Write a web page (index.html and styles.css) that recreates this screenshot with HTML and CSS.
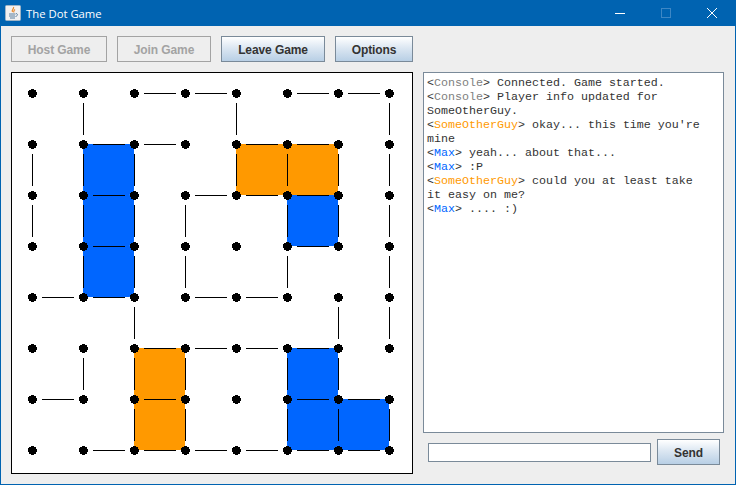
FILE: index.html
```html
<!DOCTYPE html>
<html lang="en">
<head>
  <meta charset="UTF-8" />
  <title>The Dot Game</title>
  <link rel="stylesheet" href="styles.css">
</head>
<body>
  <div class="window">
    <div class="titlebar">
      <svg class="app-icon" width="16" height="16" viewBox="0 0 16 16">
        <rect x="0.5" y="0.5" width="15" height="15" rx="1" fill="#f1f1f1" stroke="#9fb4c6" />
        <path d="M8.5 2c1 1.500-2.500 3-1 5M10 4.500c-1 1-2 1.500-1 3" fill="none" stroke="#e8892b" stroke-width="1.200" />
        <path d="M4 9h6.500M4 11h6M5 13h5M11 8.500c2 0 2 2.500-.5 3" fill="none" stroke="#5b7f9e" />
      </svg>
      <span class="title">The Dot Game</span>
      <div class="win-controls">
        <svg width="10" height="10" viewBox="0 0 10 10"><path d="M0 5.500h10" stroke="#fff" /></svg>
        <svg width="10" height="10" viewBox="0 0 10 10"><rect x="0.500" y="0.500" width="9" height="9" fill="none" stroke="#3d87c5" /></svg>
        <svg width="10" height="10" viewBox="0 0 10 10"><path d="M0 0l10 10M10 0l-10 10" stroke="#fff" /></svg>
      </div>
    </div>

    <div class="content">
      <div class="toolbar">
        <button class="btn host" disabled>Host Game</button>
        <button class="btn join" disabled>Join Game</button>
        <button class="btn leave">Leave Game</button>
        <button class="btn options">Options</button>
      </div>

      <div class="main">
        <div class="board">
          <!-- viewBox uses window coordinates, dots are 51px apart -->
          <svg width="400" height="400" viewBox="12 73 400 400">
            <g class="blue">
              <rect x="83" y="144" width="51" height="51" rx="5" />
              <rect x="83" y="195" width="51" height="51" rx="5" />
              <rect x="83" y="246" width="51" height="51" rx="5" />
              <rect x="287" y="195" width="51" height="51" rx="5" />
              <rect x="287" y="348" width="51" height="51" rx="5" />
              <rect x="287" y="399" width="51" height="51" rx="5" />
              <rect x="338" y="399" width="51" height="51" rx="5" />
            </g>
            <g class="orange">
              <rect x="236" y="144" width="51" height="51" rx="5" />
              <rect x="287" y="144" width="51" height="51" rx="5" />
              <rect x="134" y="348" width="51" height="51" rx="5" />
              <rect x="134" y="399" width="51" height="51" rx="5" />
            </g>
            <path class="edges" d="
              M144 93.500h32M195 93.500h32M297 93.500h32M348 93.500h32
              M93 144.500h32M144 144.500h32M246 144.500h32M297 144.500h32
              M93 195.500h32M195 195.500h32M246 195.500h32M297 195.500h32
              M93 246.500h32M297 246.500h32
              M42 297.500h32M93 297.500h32M195 297.500h32M246 297.500h32
              M144 348.500h32M195 348.500h32M246 348.500h32M297 348.500h32
              M42 399.500h32M144 399.500h32M297 399.500h32M348 399.500h32
              M93 450.500h32M144 450.500h32M195 450.500h32M246 450.500h32M297 450.500h32M348 450.500h32
              M83.500 103v32M236.500 103v32M389.500 103v32
              M32.500 154v32M83.500 154v32M134.500 154v32M236.500 154v32M287.500 154v32M338.500 154v32M389.500 154v32
              M32.500 205v32M83.500 205v32M134.500 205v32M185.500 205v32M287.500 205v32M338.500 205v32M389.500 205v32
              M83.500 256v32M134.500 256v32M185.500 256v32M287.500 256v32M389.500 256v32
              M134.500 307v32M338.500 307v32M389.500 307v32
              M83.500 358v32M134.500 358v32M185.500 358v32M287.500 358v32M338.500 358v32
              M134.500 409v32M185.500 409v32M287.500 409v32M338.500 409v32M389.500 409v32" />
            <path class="dots" d="
              M32.500 93.500h0M83.500 93.500h0M134.500 93.500h0M185.500 93.500h0M236.500 93.500h0M287.500 93.500h0M338.500 93.500h0M389.500 93.500h0
              M32.500 144.500h0M83.500 144.500h0M134.500 144.500h0M185.500 144.500h0M236.500 144.500h0M287.500 144.500h0M338.500 144.500h0M389.500 144.500h0
              M32.500 195.500h0M83.500 195.500h0M134.500 195.500h0M185.500 195.500h0M236.500 195.500h0M287.500 195.500h0M338.500 195.500h0M389.500 195.500h0
              M32.500 246.500h0M83.500 246.500h0M134.500 246.500h0M185.500 246.500h0M236.500 246.500h0M287.500 246.500h0M338.500 246.500h0M389.500 246.500h0
              M32.500 297.500h0M83.500 297.500h0M134.500 297.500h0M185.500 297.500h0M236.500 297.500h0M287.500 297.500h0M338.500 297.500h0M389.500 297.500h0
              M32.500 348.500h0M83.500 348.500h0M134.500 348.500h0M185.500 348.500h0M236.500 348.500h0M287.500 348.500h0M338.500 348.500h0M389.500 348.500h0
              M32.500 399.500h0M83.500 399.500h0M134.500 399.500h0M185.500 399.500h0M236.500 399.500h0M287.500 399.500h0M338.500 399.500h0M389.500 399.500h0
              M32.500 450.500h0M83.500 450.500h0M134.500 450.500h0M185.500 450.500h0M236.500 450.500h0M287.500 450.500h0M338.500 450.500h0M389.500 450.500h0" />
          </svg>
        </div>

        <div class="chat">
          <div class="log">
            <div>&lt;<span class="console">Console</span>&gt; Connected. Game started.</div>
            <div>&lt;<span class="console">Console</span>&gt; Player info updated for SomeOtherGuy.</div>
            <div>&lt;<span class="other">SomeOtherGuy</span>&gt; okay... this time you're mine</div>
            <div>&lt;<span class="max">Max</span>&gt; yeah... about that...</div>
            <div>&lt;<span class="max">Max</span>&gt; :P</div>
            <div>&lt;<span class="other">SomeOtherGuy</span>&gt; could you at least take it easy on me?</div>
            <div>&lt;<span class="max">Max</span>&gt; .... :)</div>
          </div>
          <div class="send-row">
            <input type="text" class="msg" />
            <button class="btn send">Send</button>
          </div>
        </div>
      </div>
    </div>
  </div>
</body>
</html>
```

FILE: styles.css
```css
html, body {
  margin: 0;
  padding: 0;
  height: 100%;
  overflow: hidden;
}
.window {
  width: 736px;
  height: 485px;
  box-sizing: border-box;
  display: flex;
  flex-direction: column;
  border: 1px solid #0063b1;
  border-top: none;
  background: #eeeeee;
}
.titlebar {
  flex-shrink: 0;
  height: 26px;
  display: flex;
  align-items: center;
  padding-left: 4px;
  background: #0063b1;
  color: #fff;
  font-family: 'Open Sans', sans-serif;
  font-size: 11.3px;
}
.app-icon {
  margin-right: 5px;
}
.win-controls {
  margin-left: auto;
  margin-right: 18px;
  display: flex;
  gap: 36px;
}
.content {
  flex: 1;
  padding: 10px 11px 10px 10px;
  display: flex;
  flex-direction: column;
  gap: 10px;
}
.toolbar {
  display: flex;
  gap: 10px;
}
.btn {
  height: 26px;
  padding: 1px 0 0;
  border: 1px solid #7a8a99;
  background: linear-gradient(to bottom, #ffffff, #dce7f2 45%, #b8cfe5);
  color: #333;
  font-family: 'Liberation Sans', sans-serif;
  font-size: 12px;
  font-weight: bold;
  letter-spacing: -0.1px;
}
.btn:disabled {
  border-color: #a3a3a3;
  background: #eeeeee;
  color: #a3a3a3;
}
.host { width: 96px; }
.join { width: 94px; }
.leave { width: 104px; }
.options { width: 78px; }
.send { width: 63px; }

.main {
  display: flex;
  gap: 10px;
}
.board {
  width: 402px;
  height: 402px;
  box-sizing: border-box;
  border: 1px solid #000;
  background: #fff;
}
.board svg {
  display: block;
}
.blue { fill: #0066ff; }
.orange { fill: #ff9900; }
.edges {
  fill: none;
  stroke: #000;
  stroke-width: 1;
  shape-rendering: crispEdges;
}
.dots {
  fill: none;
  stroke: #000;
  stroke-width: 9;
  stroke-linecap: round;
  shape-rendering: crispEdges;
}
.chat {
  width: 301px;
  display: flex;
  flex-direction: column;
}
.log {
  height: 361px;
  box-sizing: border-box;
  padding: 3px 17px 0 3px;
  border: 1px solid #7a8a99;
  background: #fff;
  color: #333;
  font-family: 'Liberation Mono', monospace;
  font-size: 11.67px;
  line-height: 14px;
}
.console { color: #808080; }
.other { color: #ff9900; }
.max { color: #0066ff; }
.send-row {
  display: flex;
  align-items: center;
  gap: 6px;
  padding: 6px 4px 0 5px;
}
.msg {
  width: 223px;
  height: 19px;
  box-sizing: border-box;
  padding: 0 2px;
  border: 1px solid #7a8a99;
  background: #fff;
}
```
